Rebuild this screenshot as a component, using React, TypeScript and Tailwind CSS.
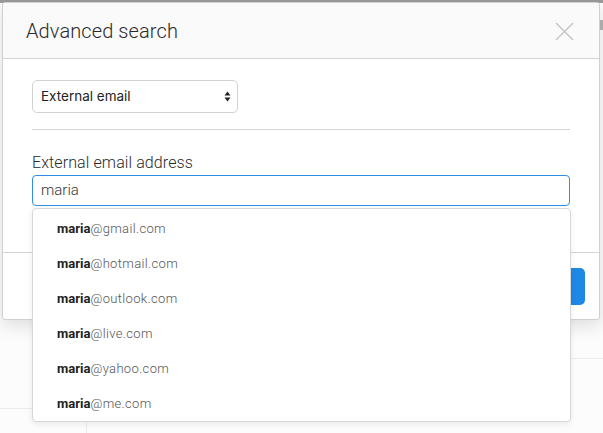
import React from 'react';

const domains = ['gmail.com', 'hotmail.com', 'outlook.com', 'live.com', 'yahoo.com', 'me.com'];

export default function App() {
  return (
    <div className="relative w-[603px] h-[433px] overflow-hidden bg-[#fcfcfd] font-['Roboto',sans-serif]">
      {/* page behind the modal */}
      <div className="absolute left-0 top-0 w-full h-[3px] bg-[#9a9a9a]" />
      <div className="absolute right-0 top-[20px] w-[3px] h-[10px] bg-[#b5b5b5]" />
      <div className="absolute left-[570px] top-[358px] w-[40px] h-px bg-[#ececef]" />
      <div className="absolute left-0 top-[408px] w-[86px] h-px bg-[#ececef]" />
      <div className="absolute left-[86px] top-[408px] w-px h-[30px] bg-[#ececef]" />

      {/* modal */}
      <div className="absolute left-[2px] top-[2px] w-[598px] bg-white border border-[#d0d0d0] rounded-[3px] shadow-[0_6px_18px_rgba(0,0,0,0.12)]">
        <div className="h-[56px] bg-[#fafafa] border-b border-[#d4d4d4] pl-[23px] pr-[25px] flex items-center justify-between rounded-t-[3px]">
          <h2 className="text-[20px] font-light text-[#2a2a2a] tracking-[0.1px]">Advanced search</h2>
          <svg width="19" height="19" viewBox="0 0 19 19" className="mt-px">
            <path d="M1 1 L18 18 M18 1 L1 18" stroke="#c4c4c4" strokeWidth="1.4" fill="none" />
          </svg>
        </div>

        <div className="px-[29px] pt-[21px] pb-[46px]">
          <div className="w-[206px] h-[33px] border border-[#d2d2d2] rounded-[5px] flex items-center justify-between pl-[8px] pr-[6px] font-['Inter',sans-serif] text-[13.5px] text-[#222]">
            <span>External email</span>
            <svg width="7" height="11" viewBox="0 0 7 11">
              <path d="M3.5 0.5 L6.5 4.5 L0.5 4.5 Z M3.5 10.5 L6.5 6.5 L0.5 6.5 Z" fill="#222" />
            </svg>
          </div>
          <div className="mt-[16px] h-px bg-[#d6d6d6]" />
          <div className="mt-[21px] text-[16px] leading-[24px] text-[#2a2a2a] font-light tracking-[0.1px]">External email address</div>
          <div className="h-[31px] border border-[#2f8de4] rounded-[4px] flex items-center pl-[8px] text-[15px] font-light text-[#333]">
            maria
          </div>
        </div>

        <div className="border-t border-[#d6d6d6] flex justify-end pt-[15px] pb-[14px] pr-[14px]">
          <div className="w-[90px] h-[37px] bg-[#1e88e5] rounded-[5px]" />
        </div>
      </div>

      {/* autocomplete dropdown */}
      <div className="absolute left-[32px] top-[208px] w-[539px] h-[214px] bg-white border border-[#d8d8d8] rounded-[4px] shadow-[0_2px_6px_rgba(0,0,0,0.08)] py-[2px]">
        {domains.map((d) => (
          <div key={d} className="h-[35px] flex items-center pl-[24px] text-[13px] text-[#555] tracking-[0.35px]">
            <span className="font-bold text-[#222] tracking-normal">maria</span>
            <span className="font-light">@{d}</span>
          </div>
        ))}
      </div>
    </div>
  );
}
